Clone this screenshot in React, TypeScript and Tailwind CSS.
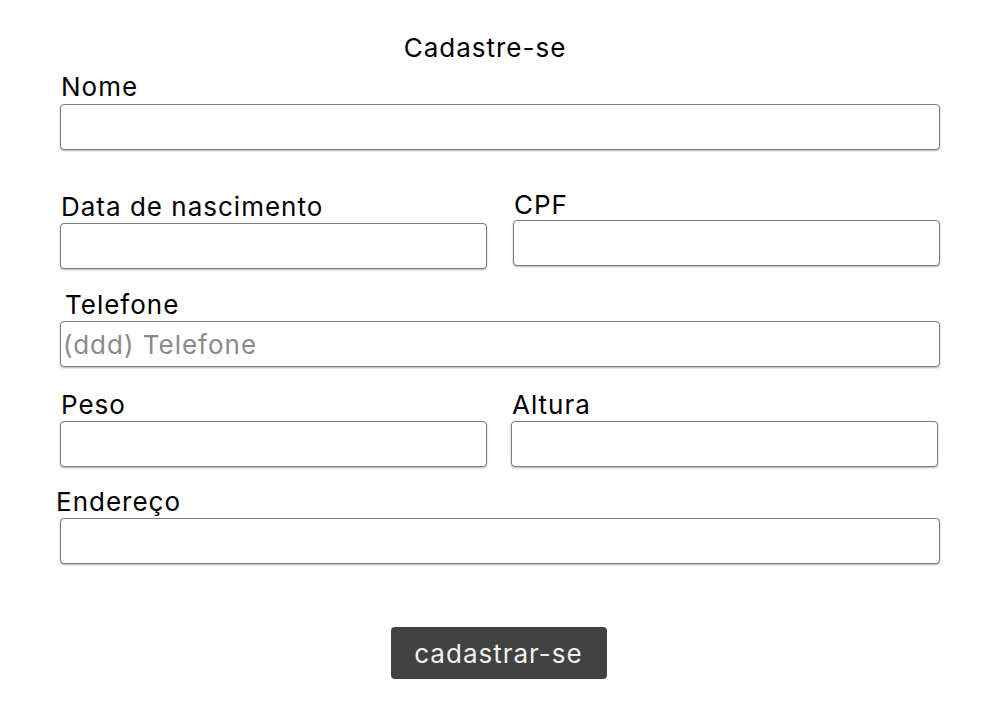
import React from "react";

const font: React.CSSProperties = {
  fontFamily: "Inter, 'Noto Sans', sans-serif",
};

const label = "text-[26px] leading-[31px] tracking-[1px]";

function Field({ placeholder }: { placeholder?: string }) {
  return (
    <input
      placeholder={placeholder}
      className="block h-[46px] w-full rounded-[4px] border border-[#7c7c7c] bg-white px-[2px] text-[26px] tracking-[1px] text-black shadow-[0_1px_2px_rgba(0,0,0,0.3)] outline-none placeholder:text-[#8a8a8a]"
      style={font}
    />
  );
}

export default function App() {
  return (
    <div className="min-h-[709px] w-[996px] bg-white text-black" style={font}>
      <div className={"w-[970px] pt-[32px] text-center " + label}>Cadastre-se</div>

      <div className="ml-[60px] w-[880px]">
        <div className={"mt-[8px] pl-[1px] " + label}>Nome</div>
        <div className="mt-[2px]">
          <Field />
        </div>

        <div className="mt-[41px] flex gap-[26px]">
          <div className="w-[427px]">
            <div className={"pl-[1px] " + label}>Data de nascimento</div>
            <div className="mt-[1px]">
              <Field />
            </div>
          </div>
          <div className="w-[427px]">
            <div className={"mt-[-2px] pl-[1px] " + label}>CPF</div>
            <div className="mt-[0px]">
              <Field />
            </div>
          </div>
        </div>

        <div className={"mt-[20px] pl-[5px] " + label}>Telefone</div>
        <div className="mt-[1px]">
          <Field placeholder="(ddd) Telefone" />
        </div>

        <div className="mt-[22px] flex gap-[24px]">
          <div className="w-[427px]">
            <div className={"pl-[1px] " + label}>Peso</div>
            <div className="mt-[1px]">
              <Field />
            </div>
          </div>
          <div className="w-[427px]">
            <div className={"pl-[1px] " + label}>Altura</div>
            <div className="mt-[1px]">
              <Field />
            </div>
          </div>
        </div>

        <div className={"mt-[19px] ml-[-4px] " + label}>Endereço</div>
        <div className="mt-[1px]">
          <Field />
        </div>

        <div className="mt-[63px] flex justify-center pr-[3px]">
          <button
            className="h-[52px] w-[216px] rounded-[4px] bg-[#424242] text-[26px] tracking-[1px] text-[#f0f0f0]"
            style={font}
          >
            cadastrar-se
          </button>
        </div>
      </div>
    </div>
  );
}
